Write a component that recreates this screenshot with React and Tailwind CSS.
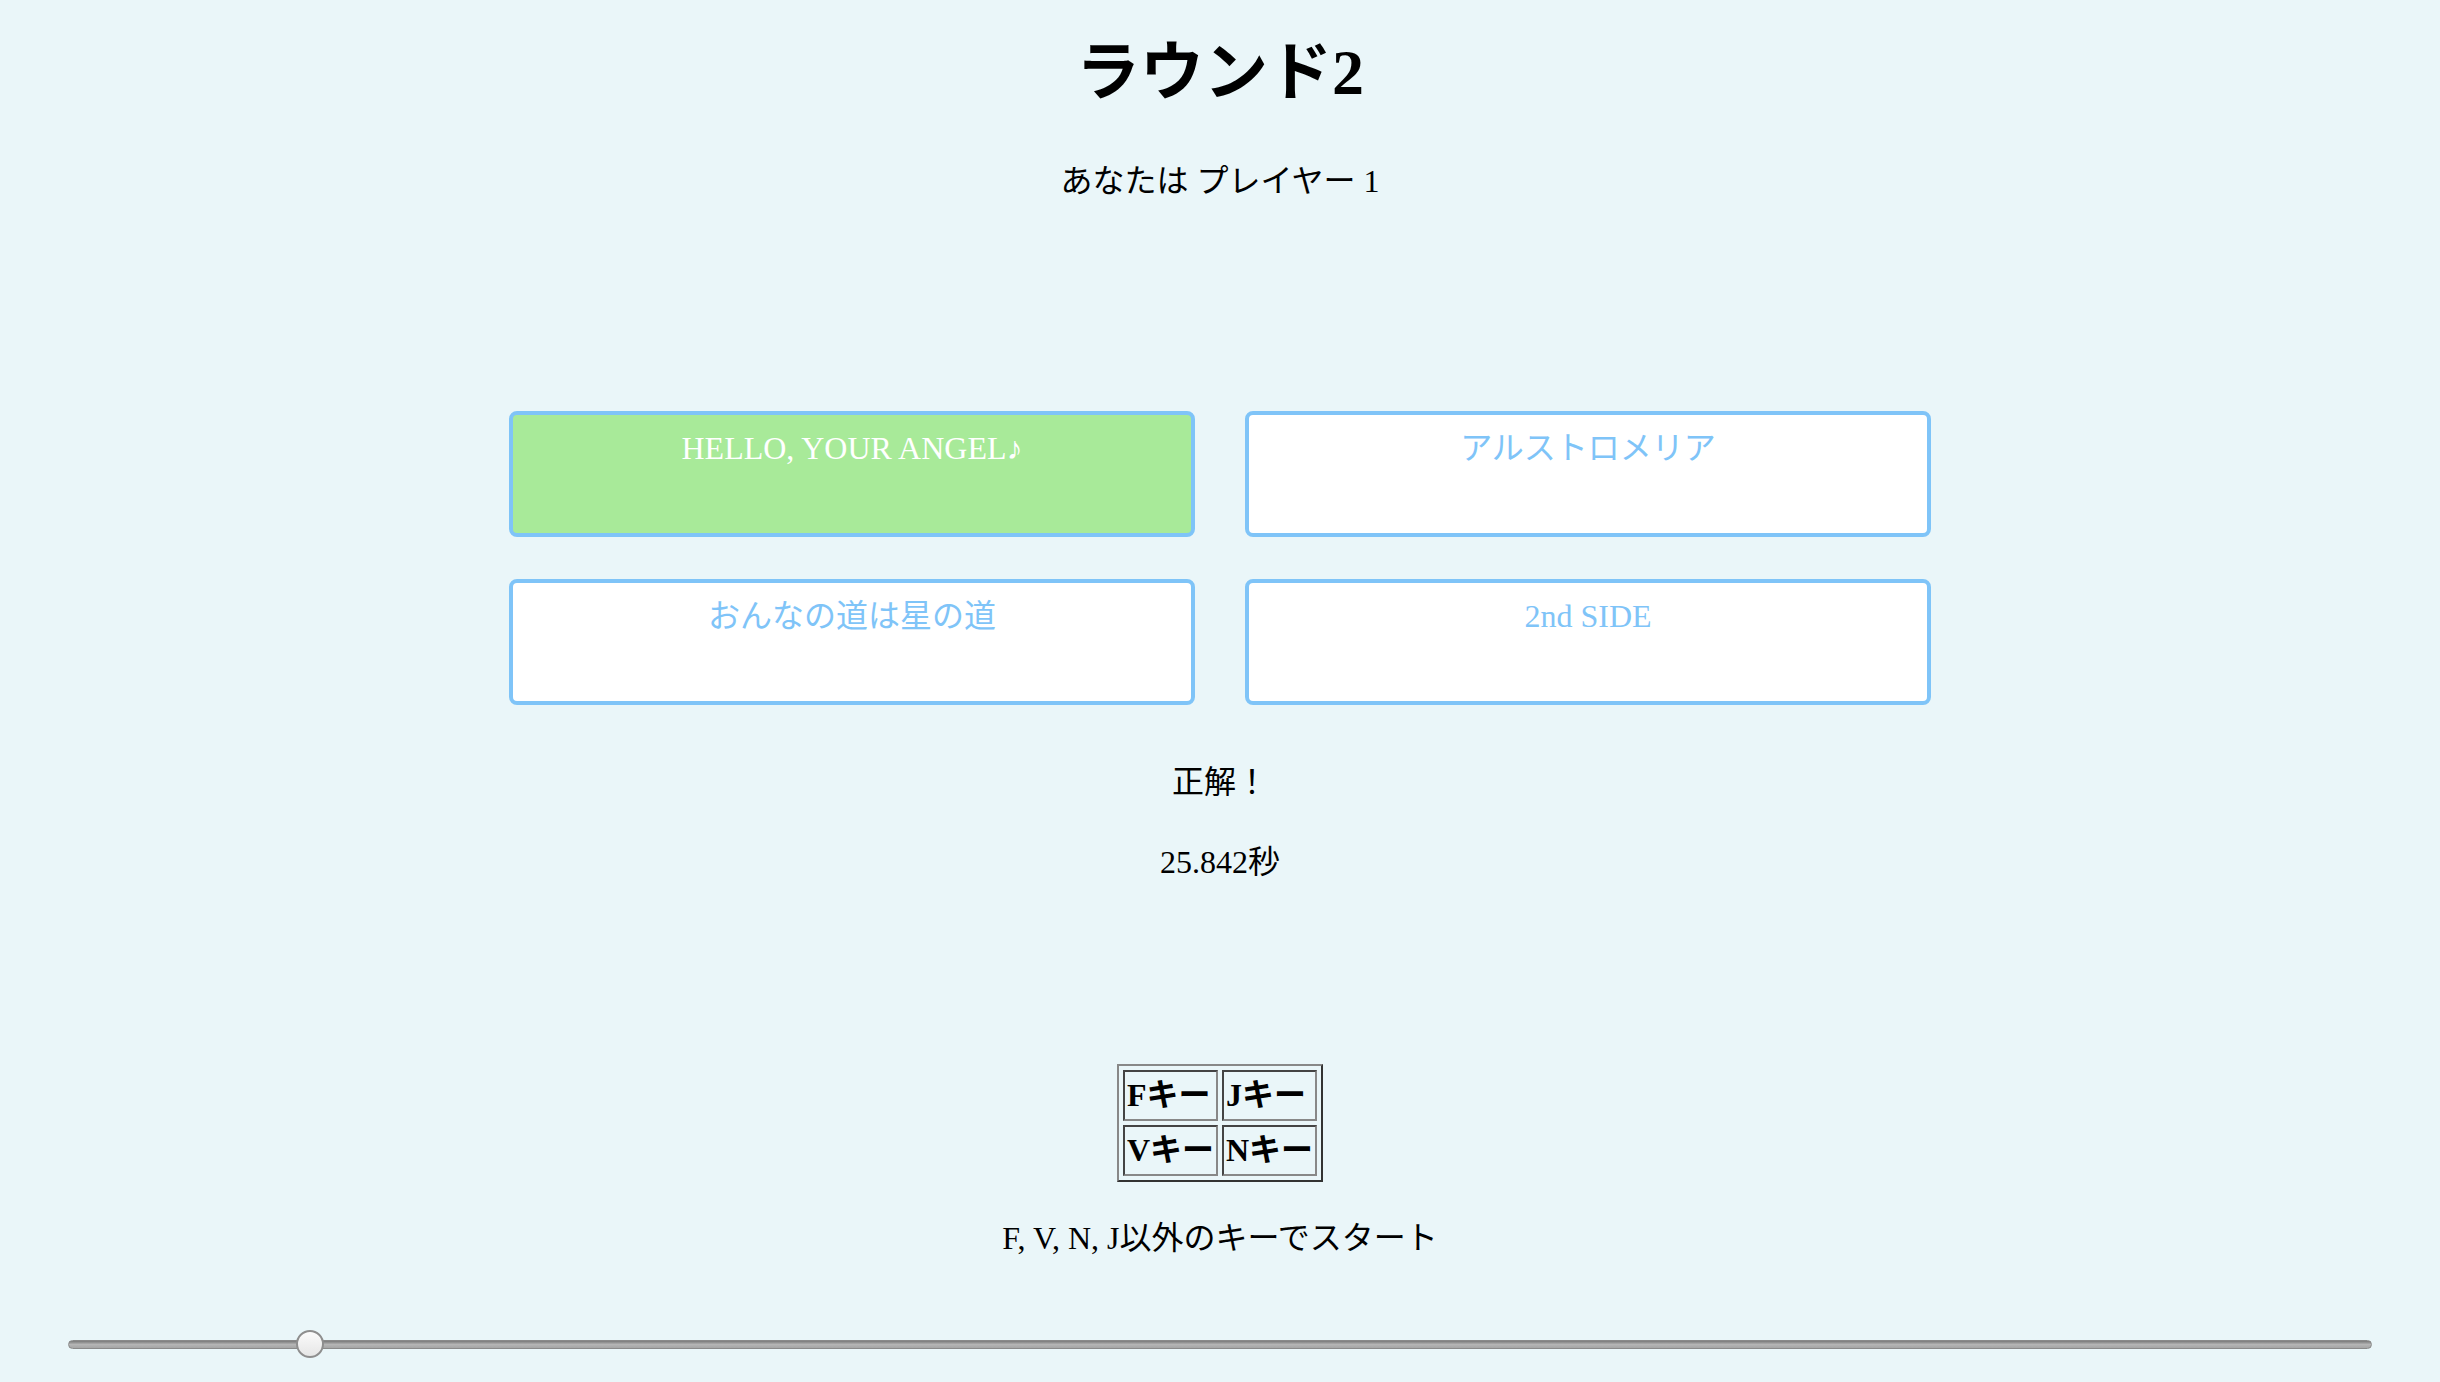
const serif = "font-['Liberation_Serif','Noto_Sans_CJK_JP',serif]";

const choices = [
  { label: 'HELLO, YOUR ANGEL♪', correct: true },
  { label: 'アルストロメリア' },
  { label: 'おんなの道は星の道' },
  { label: '2nd SIDE' },
];

function KeyTable() {
  const cell =
    'border-2 border-t-[#444] border-l-[#444] border-b-[#888] border-r-[#888] px-[2px] py-[2px] font-bold text-[32px] leading-[43px]';
  return (
    <table className="mx-auto border-separate border-spacing-[4px] border-2 border-t-[#888] border-l-[#888] border-b-[#333] border-r-[#333]">
      <tbody>
        <tr>
          <td className={cell}>Fキー</td>
          <td className={cell}>Jキー</td>
        </tr>
        <tr>
          <td className={cell}>Vキー</td>
          <td className={cell}>Nキー</td>
        </tr>
      </tbody>
    </table>
  );
}

export default function App() {
  const value = 10;
  return (
    <div className={`min-h-[1382px] bg-[#eaf6f9] text-black ${serif} flex flex-col items-center`}>
      {/* Title */}
      <h1 className="mt-[33px] text-[64px] font-bold leading-[80px]">ラウンド2</h1>
      <p className="mt-[48px] text-[32px] leading-[40px]">あなたは プレイヤー 1</p>

      {/* Answer choices */}
      <div className="mt-[210px] grid grid-cols-2 w-[1422px] gap-x-[50px] gap-y-[42px]">
        {choices.map((c) => (
          <div
            key={c.label}
            className={`h-[126px] rounded-[8px] border-[4px] border-[#7fc4f8] pt-[13px] text-center text-[32px] leading-[40px] ${
              c.correct ? 'bg-[#a8ea99] text-white' : 'bg-white text-[#7fc4f8]'
            }`}
          >
            {c.label}
          </div>
        ))}
      </div>

      {/* Result */}
      <p className="mt-[57px] text-[32px] leading-[40px]">正解！</p>
      <p className="mt-[40px] text-[32px] leading-[40px]">25.842秒</p>

      {/* Key map */}
      <div className="mt-[182px]">
        <KeyTable />
      </div>
      <p className="mt-[36px] text-[32px] leading-[40px]">F, V, N, J以外のキーでスタート</p>

      {/* Progress slider */}
      <div className="mt-[72px] w-[2304px] relative h-[28px] flex items-center">
        <div className="w-full h-[9px] rounded-full bg-gradient-to-b from-[#7a7a7a] via-[#b5b5b5] to-[#a5a5a5] border border-[#8a8a8a]" />
        <div
          className="absolute top-0 w-[28px] h-[28px] rounded-full border-2 border-[#8e8e8e] bg-gradient-to-b from-[#fbfbfb] to-[#e6e6e6]"
          style={{ left: `${(value / 100) * (2304 - 28)}px` }}
        />
      </div>
    </div>
  );
}
